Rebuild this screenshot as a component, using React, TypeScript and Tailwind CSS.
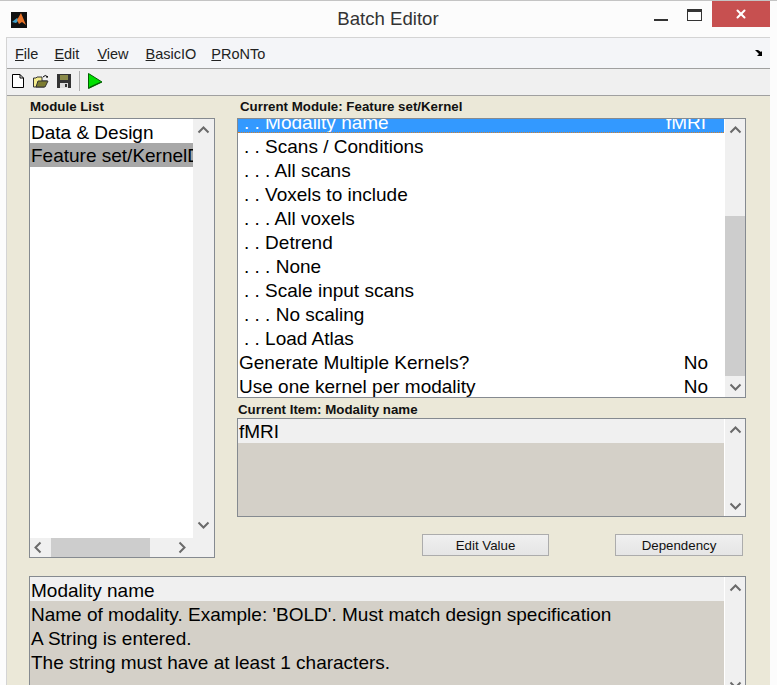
import { X } from "lucide-react";

const font = { fontFamily: '"Liberation Sans", Arial, sans-serif' };

const moduleRows = [
  [". . Scans / Conditions", ""],
  [". . . All scans", ""],
  [". . Voxels to include", ""],
  [". . . All voxels", ""],
  [". . Detrend", ""],
  [". . . None", ""],
  [". . Scale input scans", ""],
  [". . . No scaling", ""],
  [". . Load Atlas", ""],
  ["Generate Multiple Kernels?", "No"],
  ["Use one kernel per modality", "No"],
];

const Chevron = ({ up }: { up?: boolean }) => (
  <svg width="13" height="9" viewBox="0 0 13 9" className="block">
    <path
      d={up ? "M1.5 7.5 L6.5 2.5 L11.5 7.5" : "M1.5 1.5 L6.5 6.5 L11.5 1.5"}
      fill="none"
      stroke="#6a6a6a"
      strokeWidth="2"
    />
  </svg>
);

const ScrollV = ({ thumbTop, thumbH }: { thumbTop?: number; thumbH?: number }) => (
  <div className="relative w-[21px] shrink-0 border-l border-white bg-[#f0f0f0] flex flex-col items-center justify-between pt-[6px] pb-[5px]">
    <Chevron up />
    {thumbH ? (
      <div
        className="absolute left-0 right-0 bg-[#cdcdcd]"
        style={{ top: thumbTop, height: thumbH }}
      />
    ) : null}
    <Chevron />
  </div>
);

export default function App() {
  return (
    <div
      className="w-[777px] h-[685px] overflow-hidden bg-[#fcfcfc] border-t border-[#c4c4c4] flex flex-col text-black"
      style={font}
    >
      <div className="h-[36px] shrink-0 flex items-center">
        <svg width="16" height="16" viewBox="0 0 16 16" className="ml-[11px] mt-[1px]">
          <rect width="16" height="16" fill="#111" />
          <path d="M1 10 L6 6 L8 8 L5 11 Z" fill="#3f9fc8" />
          <path d="M6 8 L10 1 L15 13 L11 10 L8 12 Z" fill="#e8742a" />
        </svg>
        <div className="flex-1 text-center text-[18.6px] text-[#333] pl-[95px]">Batch Editor</div>
        <div className="flex items-start self-start h-full">
          <div className="w-[14px] h-[2px] bg-[#333] mt-[18px] mr-[19px]" />
          <div className="w-[13px] h-[8px] border border-[#333] border-t-[3px] mt-[8px] mr-[10px] box-content" />
          <div className="w-[58px] h-[26px] bg-[#c75050] flex items-center justify-center mr-[7px]">
            <X size={14} strokeWidth={3.5} color="white" />
          </div>
        </div>
      </div>

      <div className="ml-[6px] mr-[7px] flex-1 flex flex-col border-l border-t border-[#d4d4d4] bg-[#ebe8d8] min-h-0">
        <div className="h-[31px] shrink-0 bg-[#f4f5f8] border-b border-[#a0a0a0] flex items-center justify-between text-[14.5px] text-[#222] pl-[8px] pr-[7px]">
          <div className="flex pt-[3px]">
            <span><u>F</u>ile</span>
            <span className="ml-[16px]"><u>E</u>dit</span>
            <span className="ml-[18px]"><u>V</u>iew</span>
            <span className="ml-[17px]"><u>B</u>asicIO</span>
            <span className="ml-[15px]"><u>P</u>RoNTo</span>
          </div>
          <svg width="8" height="6" viewBox="0 0 8 6"><path d="M0 0 L3 0 L6 2 L7 1 L7 6 L2 6 L4 4 Z" fill="#000" /></svg>
        </div>

        <div className="h-[27px] shrink-0 bg-[#f0f0f0] border-b border-[#a0a0a0] flex items-center pl-[5px] pb-[2px]">
          <svg width="12" height="14" viewBox="0 0 12 14">
            <path d="M.5.5 H8 L11.5 4 V13.5 H.5 Z" fill="#fff" stroke="#000" />
            <path d="M8 .5 V4 H11.5" fill="none" stroke="#000" />
          </svg>
          <svg width="16" height="14" viewBox="0 0 16 14" className="ml-[9px]">
            <path d="M.5 13 V4 H3 L4 3 H9 V7 H14 L11 13 Z" fill="#f4ec8c" stroke="#333" />
            <path d="M3 13 L5 7 H15 L12 13 Z" fill="#7c7c30" stroke="#333" />
            <path d="M10 3 Q12 0 15 3 L13 3" fill="none" stroke="#000" />
          </svg>
          <svg width="14" height="14" viewBox="0 0 14 14" className="ml-[8px]">
            <rect width="14" height="14" fill="#333" />
            <rect x="3" y="1" width="8" height="5" fill="#8a8a4a" />
            <rect x="3" y="9" width="8" height="5" fill="#ddd" />
            <rect x="8" y="10" width="2" height="3" fill="#333" />
          </svg>
          <div className="w-px h-[20px] bg-[#b0b0b0] ml-[8px]" />
          <svg width="15" height="16" viewBox="0 0 15 16" className="ml-[8px]">
            <path d="M.5.5 L14 9 L.5 15.5 Z" fill="#00e000" stroke="#006000" />
            <path d="M2 13.5 L12 9 L14 9 L.5 15.5 Z" fill="#006000" />
          </svg>
        </div>

        <div className="flex-1 min-h-0 pl-[22px] pr-[24px]">
          <div className="flex gap-[22px] h-[463px]">
            <div className="w-[186px] shrink-0 flex flex-col">
              <div className="h-[22px] pt-[3px] pl-[1px] text-[13.3px] font-bold text-[#111] leading-[16px]">Module List</div>
              <div className="h-[440px] border border-[#858a90] bg-white flex flex-col">
                <div className="flex flex-1 min-h-0">
                  <div className="flex-1 min-w-0 text-[19px] overflow-hidden">
                    <div className="h-[24px] leading-[28px] pl-[1px] whitespace-nowrap">Data &amp; Design</div>
                    <div className="h-[24px] leading-[26px] pl-[1px] whitespace-nowrap bg-[#a8a8a8] overflow-hidden">Feature set/KernelDesign</div>
                  </div>
                  <div className="w-[21px] shrink-0 bg-[#f0f0f0] flex flex-col items-center justify-between pt-[6px] pb-[8px]">
                    <Chevron up />
                    <Chevron />
                  </div>
                </div>
                <div className="h-[19px] shrink-0 bg-[#f0f0f0] flex items-center">
                  <div className="w-[21px] flex justify-start pl-[3px]">
                    <svg width="9" height="13" viewBox="0 0 9 13"><path d="M7.5 1.5 L2.5 6.5 L7.5 11.5" fill="none" stroke="#6a6a6a" strokeWidth="2" /></svg>
                  </div>
                  <div className="w-[99px] h-full bg-[#cdcdcd]" />
                  <div className="w-[37px] flex justify-end">
                    <svg width="9" height="13" viewBox="0 0 9 13"><path d="M1.5 1.5 L6.5 6.5 L1.5 11.5" fill="none" stroke="#6a6a6a" strokeWidth="2" /></svg>
                  </div>
                </div>
              </div>
            </div>

            <div className="flex-1 min-w-0 flex flex-col">
              <div className="h-[22px] pt-[3px] text-[13.3px] font-bold text-[#111] leading-[16px] pl-[3px]">Current Module: Feature set/Kernel</div>
              <div className="h-[280px] shrink-0 border border-[#858a90] bg-white flex">
                <div className="flex-1 min-w-0 text-[19px] leading-[26px] overflow-hidden">
                  <div className="h-[14px] mb-[1px] bg-[#3399ff] border-b border-dotted border-[#d08030] text-white overflow-hidden relative">
                    <div className="absolute left-[6px] right-[18px] bottom-[-3px] flex justify-between leading-[24px]">
                      <span>. . Modality name</span>
                      <span>fMRI</span>
                    </div>
                  </div>
                  {moduleRows.map(([label, value]) => (
                    <div key={label} className="flex justify-between h-[24px] whitespace-nowrap">
                      <span className={value ? "pl-[1px]" : "pl-[6px]"}>{label}</span>
                      {value ? <span className="pr-[16px]">{value}</span> : null}
                    </div>
                  ))}
                </div>
                <ScrollV thumbTop={97} thumbH={160} />
              </div>

              <div className="h-[20px] pt-[4px] text-[13.3px] font-bold text-[#111] leading-[16px] shrink-0 pl-[1px]">Current Item: Modality name</div>
              <div className="h-[99px] shrink-0 border border-[#858a90] bg-[#d4d0c8] flex">
                <div className="flex-1 min-w-0 text-[19px]">
                  <div className="bg-[#f0f0f0] h-[24px] leading-[26px] pl-[1px]">fMRI</div>
                </div>
                <ScrollV />
              </div>

              <div className="flex justify-end mt-[17px] pr-[3px] gap-[66px] text-[13.3px] text-[#111]">
                <div className="w-[127px] h-[22px] pt-[1px] border border-[#acacac] bg-gradient-to-b from-[#f0f0f0] to-[#e5e5e5] flex items-center justify-center">Edit Value</div>
                <div className="w-[128px] h-[22px] pt-[1px] border border-[#acacac] bg-gradient-to-b from-[#f0f0f0] to-[#e5e5e5] flex items-center justify-center">Dependency</div>
              </div>
            </div>
          </div>

          <div className="mt-[17px] h-[120px] border border-[#858a90] bg-[#d4d0c8] flex">
            <div className="flex-1 min-w-0 text-[19px]">
              <div className="h-[24px] leading-[28px] bg-[#f0f0f0] pl-[1px]">Modality name</div>
              <div className="h-[24px] leading-[28px] pl-[1px]">Name of modality. Example: 'BOLD'. Must match design specification</div>
              <div className="h-[24px] leading-[28px] pl-[1px]">A String is entered.</div>
              <div className="h-[24px] leading-[28px] pl-[1px]">The string must have at least 1 characters.</div>
            </div>
            <ScrollV />
          </div>
        </div>
      </div>
    </div>
  );
}
